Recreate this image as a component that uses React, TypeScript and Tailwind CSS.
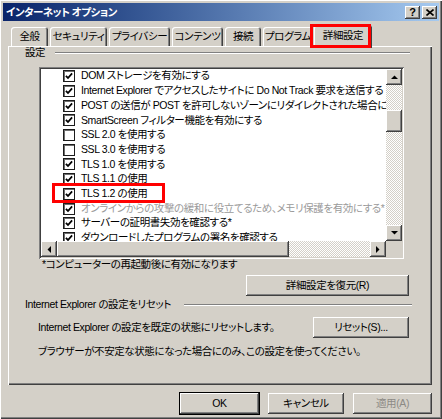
import React from 'react';

const items = [
  { t: 'DOM ストレージを有効にする', c: true },
  { t: 'Internet Explorer でアクセスしたサイトに Do Not Track 要求を送信する', c: true },
  { t: 'POST の送信が POST を許可しないゾーンにリダイレクトされた場合に警告する', c: true },
  { t: 'SmartScreen フィルター機能を有効にする', c: true },
  { t: 'SSL 2.0 を使用する', c: false },
  { t: 'SSL 3.0 を使用する', c: false },
  { t: 'TLS 1.0 を使用する', c: true },
  { t: 'TLS 1.1 の使用', c: true },
  { t: 'TLS 1.2 の使用', c: true },
  { t: 'オンラインからの攻撃の緩和に役立てるため、メモリ保護を有効にする*', c: true, d: true },
  { t: 'サーバーの証明書失効を確認する*', c: true },
  { t: 'ダウンロードしたプログラムの署名を確認する', c: true },
];

const tabs = [
  { t: '全般', w: 'w-[37px]' },
  { t: 'セキュリティ', w: 'w-[57px]' },
  { t: 'プライバシー', w: 'w-[61px]' },
  { t: 'コンテンツ', w: 'w-[51px]' },
  { t: '接続', w: 'w-[36px]' },
  { t: 'プログラム', w: 'w-[50px]' },
];

const raised =
  'bg-[#d4d0c8] shadow-[inset_-1px_-1px_#404040,inset_1px_1px_#ffffff,inset_-2px_-2px_#808080,inset_2px_2px_#d4d0c8]';

const Arrow: React.FC<{ dir: 'up' | 'down' | 'left' | 'right' }> = ({ dir }) => {
  const pts = {
    up: '0,4 7,4 3.5,0.5',
    down: '0,0 7,0 3.5,3.5',
    left: '4,0 4,7 0.5,3.5',
    right: '0,0 0,7 3.5,3.5',
  }[dir];
  const vertical = dir === 'up' || dir === 'down';
  return (
    <svg width={vertical ? 7 : 4} height={vertical ? 4 : 7} viewBox={vertical ? '0 0 7 4' : '0 0 4 7'}>
      <polygon points={pts} fill="#000" />
    </svg>
  );
};

const ScrollBtn: React.FC<{ dir: 'up' | 'down' | 'left' | 'right' }> = ({ dir }) => (
  <div className={`w-[16px] h-[16px] shrink-0 flex items-center justify-center ${raised}`}>
    <Arrow dir={dir} />
  </div>
);

const Check: React.FC<{ on: boolean }> = ({ on }) => (
  <div className="w-[12px] h-[12px] shrink-0 bg-white border border-[#1c1c1c] shadow-[inset_1px_1px_#6e6e6e] flex items-center justify-center">
    {on && (
      <svg width="8" height="8" viewBox="0 0 8 8">
        <polyline points="0.9,3.8 3,6 7.1,1.4" fill="none" stroke="#000" strokeWidth="1.8" />
      </svg>
    )}
  </div>
);

const Button: React.FC<{ label: string; w: string; disabled?: boolean }> = ({ label, w, disabled }) => (
  <div
    className={`${w} h-[21px] flex items-center justify-center whitespace-nowrap ${raised} ${
      disabled ? 'text-[#8c8a85]' : 'text-black'
    }`}
  >
    {label}
  </div>
);

const Etched: React.FC<{ className?: string }> = ({ className }) => (
  <div className={`h-[2px] border-t border-[#808080] border-b border-b-white ${className ?? ''}`} />
);

const App: React.FC = () => {
  return (
    <div className="relative w-[442px] h-[419px] bg-[#d4d0c8] pt-[3px] px-[3px] text-[10.5px] tracking-[-0.4px] text-black font-['Liberation_Sans','Noto_Sans_CJK_JP',sans-serif] [font-feature-settings:'palt'] shadow-[inset_1px_1px_#ffffff,inset_-1px_-1px_#404040,inset_-2px_-2px_#808080] overflow-hidden">
      {/* title bar */}
      <div className="h-[18px] flex items-center justify-between pl-[3px] pr-[2px] bg-gradient-to-r from-[#0a246a] to-[#a6caf0]">
        <span className="text-white font-bold text-[10.5px] tracking-[-0.5px] leading-none whitespace-nowrap">インターネット オプション</span>
        <div className="flex gap-[2px]">
          <div className={`w-[15px] h-[13px] flex items-center justify-center font-bold text-[11px] leading-none ${raised}`}>?</div>
          <div className={`w-[15px] h-[13px] flex items-center justify-center ${raised}`}>
            <svg width="8" height="7" viewBox="0 0 8 7">
              <path d="M0.5 0.5 L7.5 6.5 M7.5 0.5 L0.5 6.5" stroke="#000" strokeWidth="1.6" />
            </svg>
          </div>
        </div>
      </div>

      {/* tabs */}
      <div className="relative z-10 h-[25px] flex items-end pl-[8px] gap-[2px] whitespace-nowrap">
        {tabs.map((tab) => (
          <div
            key={tab.t}
            className={`${tab.w} h-[19px] flex items-center justify-center rounded-t-[3px] bg-[#d4d0c8] shadow-[inset_1px_1px_#ffffff,inset_-1px_0_#404040,inset_-2px_0_#808080]`}
          >
            {tab.t}
          </div>
        ))}
        <div className="w-[58px] h-[23px] -mb-[2px] -ml-[1px] flex items-center justify-center rounded-t-[3px] bg-[#d4d0c8] pb-[2px] shadow-[inset_1px_1px_#ffffff,inset_-1px_0_#404040,inset_-2px_0_#808080]">
          詳細設定
        </div>
      </div>

      {/* tab panel */}
      <div className="ml-[5px] w-[424px] h-[339px] bg-[#d4d0c8] shadow-[inset_1px_1px_#ffffff,inset_-1px_-1px_#404040,inset_-2px_-2px_#808080] flex flex-col">
        <div className="h-[14px] flex items-center pl-[17px] pr-[22px]">
          <span>設定</span>
          <Etched className="flex-1 ml-[10px]" />
        </div>

        {/* list */}
        <div className="mt-[7px] ml-[31px] w-[365px] h-[192px] p-[2px] bg-white shadow-[inset_1px_1px_#808080,inset_-1px_-1px_#ffffff,inset_2px_2px_#404040,inset_-2px_-2px_#d4d0c8]">
          <div className="w-full h-full grid grid-cols-[1fr_16px] grid-rows-[1fr_16px]">
            <div className="overflow-hidden bg-white">
              {items.map((it) => (
                <div key={it.t} className="h-[14.7px] flex items-center pl-[22px] gap-[6px] whitespace-nowrap">
                  <Check on={it.c} />
                  <span className={it.d ? 'text-[#9a9a9a]' : ''}>{it.t}</span>
                </div>
              ))}
            </div>
            <div className="flex flex-col">
              <ScrollBtn dir="up" />
              <div className="flex-1 flex flex-col bg-[repeating-conic-gradient(#d4d0c8_0_25%,#ffffff_0_50%)] bg-[length:2px_2px]">
                <div className={`mt-[25px] h-[22px] ${raised}`} />
              </div>
              <ScrollBtn dir="down" />
            </div>
            <div className="flex">
              <ScrollBtn dir="left" />
              <div className="flex-1 flex bg-[repeating-conic-gradient(#d4d0c8_0_25%,#ffffff_0_50%)] bg-[length:2px_2px]">
                <div className={`w-[232px] h-full ${raised}`} />
              </div>
              <ScrollBtn dir="right" />
            </div>
            <div className="bg-[#d4d0c8]" />
          </div>
        </div>

        <div className="h-[12px] flex items-center pl-[34px] whitespace-nowrap">*コンピューターの再起動後に有効になります</div>

        <div className="mt-[4px] flex justify-end pr-[23px]">
          <Button label="詳細設定を復元(R)" w="w-[163px]" />
        </div>

        <div className="mt-[2px] h-[14px] flex items-center pl-[17px] pr-[20px] whitespace-nowrap">
          <span>Internet Explorer の設定をリセット</span>
          <Etched className="flex-1 ml-[13px]" />
        </div>

        <div className="mt-[5px] flex items-center justify-between pl-[30px] pr-[23px] whitespace-nowrap">
          <span>Internet Explorer の設定を既定の状態にリセットします。</span>
          <Button label="リセット(S)..." w="w-[96px]" />
        </div>

        <div className="mt-[7px] h-[14px] flex items-center pl-[30px] whitespace-nowrap">
          ブラウザーが不安定な状態になった場合にのみ、この設定を使ってください。
        </div>
      </div>

      {/* dialog buttons */}
      <div className="mt-[7px] flex justify-end gap-[8px] pr-[7px]">
        <div className="border border-black">
          <Button label="OK" w="w-[79px]" />
        </div>
        <div className="pt-[1px]">
          <Button label="キャンセル" w="w-[76px]" />
        </div>
        <div className="pt-[1px] ml-[1px]">
          <Button label="適用(A)" w="w-[79px]" disabled />
        </div>
      </div>

      {/* red highlight boxes */}
      <div className="absolute left-[310px] top-[24px] w-[61px] h-[24px] border-[3px] border-[#ff0000] z-20" />
      <div className="absolute left-[52px] top-[183px] w-[113px] h-[20px] border-[3px] border-[#ff0000] z-20" />
    </div>
  );
};

export default App;
